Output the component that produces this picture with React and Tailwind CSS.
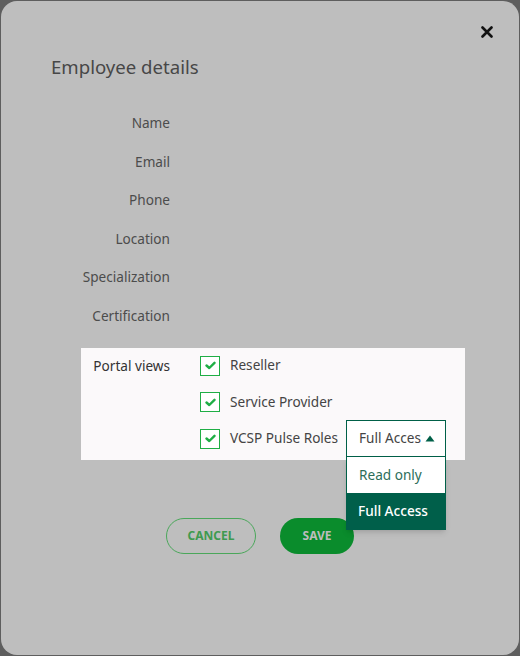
import React from 'react';

const font = { fontFamily: '"Noto Sans", "Open Sans", sans-serif' };

const fields = ['Name', 'Email', 'Phone', 'Location', 'Specialization', 'Certification'];

function Check() {
    return (
        <span className="h-[20px] w-[20px] shrink-0 border-[1.5px] border-[#1fae45] bg-white flex items-center justify-center">
            <svg width="11" height="9" viewBox="0 0 11 9">
                <path d="M1.5 4.5 L4.3 7 L9.5 1.8" fill="none" stroke="#1fae45" strokeWidth="2.4" strokeLinecap="round" strokeLinejoin="round" />
            </svg>
        </span>
    );
}

function RoleSelect() {
    return (
        <div className="relative ml-[8px] w-[100px]">
            <div className="h-[37px] border-[1.5px] border-[#006048] bg-white flex items-center pl-[12px] pr-[10px]">
                <span className="flex-1 overflow-hidden whitespace-nowrap text-[13.6px] text-[#444]" style={{ textOverflow: 'clip' }}>Full Access</span>
                <svg width="10" height="7" viewBox="0 0 10 7" className="ml-[4px] shrink-0">
                    <path d="M5 0.5 L9.5 6.5 L0.5 6.5 Z" fill="#006048" />
                </svg>
            </div>
            <div className="absolute left-0 top-full w-[100px] shadow-md">
                <div className="h-[36px] bg-white border-x-[1.5px] border-[#006048] flex items-center pl-[12px] text-[13.6px] text-[#2d6e5a]">Read only</div>
                <div className="h-[37px] bg-[#005f4a] flex items-center pl-[12px] text-[13.6px] font-medium text-white">Full Access</div>
            </div>
        </div>
    );
}

export default function App() {
    return (
        <div className="h-[656px] w-[520px] bg-[#5e5e5e] p-px" style={font}>
            <div className="relative h-full w-full bg-[#bebebe] rounded-[16px] overflow-hidden">
                <button className="absolute right-[26px] top-[25px] p-0">
                    <svg width="12" height="12" viewBox="0 0 12 12">
                        <path d="M1.5 1.5 L10.5 10.5 M10.5 1.5 L1.5 10.5" stroke="#111" strokeWidth="2.6" strokeLinecap="round" />
                    </svg>
                </button>

                <h2 className="pl-[50px] pt-[52px] text-[18.6px] leading-[28px] text-[#474747]">Employee details</h2>

                <div className="mt-[23px] ml-[80px] w-[384px]">
                    {fields.map((f) => (
                        <div key={f} className="h-[38.6px] flex items-center">
                            <span className="w-[89px] text-right text-[13.6px] text-[#4c4c4c]">{f}</span>
                        </div>
                    ))}

                    <div className="mt-[12px] bg-[#fbf9fa] pt-[8px] pb-[11px] flex">
                        <span className="w-[89px] text-right text-[13.6px] leading-[20px] text-[#333]">Portal views</span>
                        <div className="ml-[30px] flex flex-col gap-[16.5px]">
                            <div className="h-[20px] flex items-center">
                                <Check />
                                <span className="ml-[10px] text-[13.6px] text-[#444]">Reseller</span>
                            </div>
                            <div className="h-[20px] flex items-center">
                                <Check />
                                <span className="ml-[10px] text-[13.6px] text-[#444]">Service Provider</span>
                            </div>
                            <div className="h-[20px] flex items-center">
                                <Check />
                                <span className="ml-[10px] text-[13.6px] text-[#444]">VCSP Pulse Roles</span>
                                <RoleSelect />
                            </div>
                        </div>
                    </div>
                </div>

                <div className="mt-[58px] flex justify-center gap-[24px]">
                    <button className="h-[36px] w-[90px] rounded-full border-[1.5px] border-[#4aa75a] text-[12px] font-bold text-[#3f9a4f]">CANCEL</button>
                    <button className="h-[36px] w-[74px] rounded-full bg-[#0a8c2c] text-[12px] font-bold text-[#bdbdbd]">SAVE</button>
                </div>
            </div>
        </div>
    );
}
